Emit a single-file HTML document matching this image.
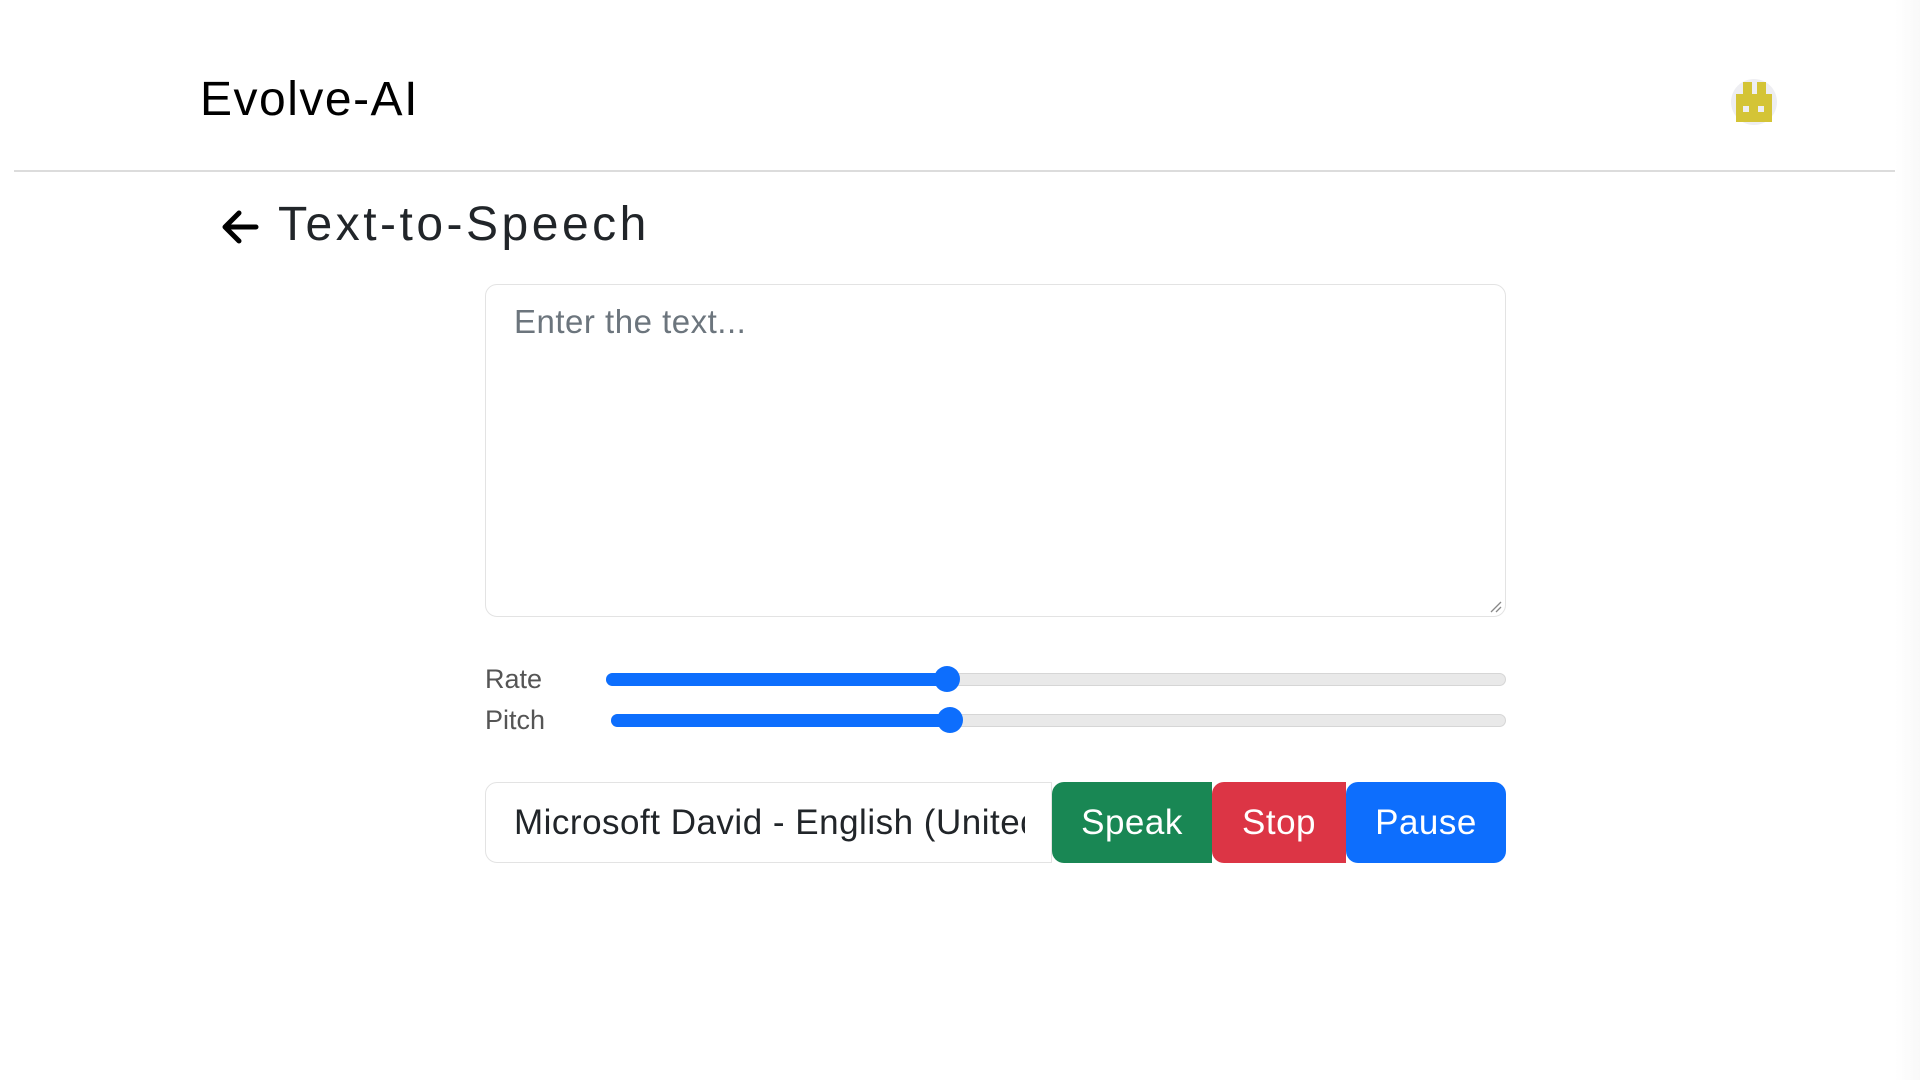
<!DOCTYPE html>
<html><head><meta charset="utf-8"><style>
*{box-sizing:border-box;margin:0;padding:0}
body{width:1920px;height:1080px;background:#fff;font-family:"Liberation Sans",sans-serif;position:relative;overflow:hidden;color:#212529}
.abs{position:absolute}
.title{left:200px;top:72px;font-size:48px;color:#000;letter-spacing:1.5px;line-height:56px}
.hr{left:14px;top:170px;width:1906px;height:2px;background:#dcdcdc}
.h2{left:278px;top:197px;font-size:48px;line-height:56px;letter-spacing:3.5px;color:#212529}
.ta{left:485px;top:284px;width:1021px;height:333px;border:1px solid #e3e3e3;border-radius:12px}
.ph{left:514px;top:302px;font-size:33px;color:#6c757d;line-height:40px;letter-spacing:.5px}
.lbl{font-size:27px;color:#555;line-height:32px}
.track{height:13px;border-radius:7px;background:#e9e9e9;border:1px solid #d6d6d6}
.fill{height:13px;border-radius:7px;background:#0d6efd}
.thumb{width:26px;height:26px;border-radius:50%;background:#0d6efd}
.sel{left:485px;top:782px;width:567px;height:81px;border:1px solid #e3e3e3;border-radius:12px 0 0 12px}
.seltxt{left:514px;top:782px;width:511px;height:81px;font-size:35px;line-height:81px;color:#212529;white-space:nowrap;overflow:hidden;letter-spacing:.5px}
.btn{top:782px;height:81px;color:#fff;font-size:35px;line-height:81px;text-align:center;letter-spacing:.5px}
</style></head><body>
<div class="abs title">Evolve-AI</div>
<div class="abs" style="left:1731px;top:79px;width:46px;height:46px;border-radius:50%;background:#eeeef2">
<svg width="46" height="46" viewBox="0 0 46 46"><path fill="#d4c436" d="M12 3h9v12h5V3h9v12h6v28H5V15h7z"/><rect x="12" y="27" width="6" height="6" fill="#eeeef2"/><rect x="27" y="27" width="6" height="6" fill="#eeeef2"/></svg></div>
<div class="abs hr"></div>
<svg class="abs" style="left:220px;top:208px" width="40" height="38" viewBox="0 0 40 38"><path d="M36 19H6M19 5L5 19l14 14" stroke="#000" stroke-width="5" fill="none" stroke-linecap="round" stroke-linejoin="round"/></svg>
<div class="abs h2">Text-to-Speech</div>
<div class="abs ta"></div>
<div class="abs ph">Enter the text...</div>
<svg class="abs" style="left:1490px;top:601px" width="12" height="12"><path d="M11 1L1 11M11 6L6 11" stroke="#888" stroke-width="1.3"/></svg>
<div class="abs lbl" style="left:485px;top:663px">Rate</div>
<div class="abs track" style="left:606px;top:673px;width:900px"></div>
<div class="abs fill" style="left:606px;top:673px;width:345px"></div>
<div class="abs thumb" style="left:934px;top:666px"></div>
<div class="abs lbl" style="left:485px;top:704px">Pitch</div>
<div class="abs track" style="left:611px;top:714px;width:895px"></div>
<div class="abs fill" style="left:611px;top:714px;width:345px"></div>
<div class="abs thumb" style="left:937px;top:707px"></div>
<div class="abs sel"></div>
<div class="abs seltxt">Microsoft David - English (United States)</div>
<div class="abs btn" style="left:1052px;width:160px;background:#198754;border-radius:12px 0 0 12px">Speak</div>
<div class="abs btn" style="left:1212px;width:134px;background:#dc3545;border-radius:12px 0 0 12px">Stop</div>
<div class="abs btn" style="left:1346px;width:160px;background:#0d6efd;border-radius:12px">Pause</div>
<div class="abs" style="left:1895px;top:0;width:25px;height:1080px;background:linear-gradient(90deg,#fff,#f9f9f9)"></div>
</body></html>
